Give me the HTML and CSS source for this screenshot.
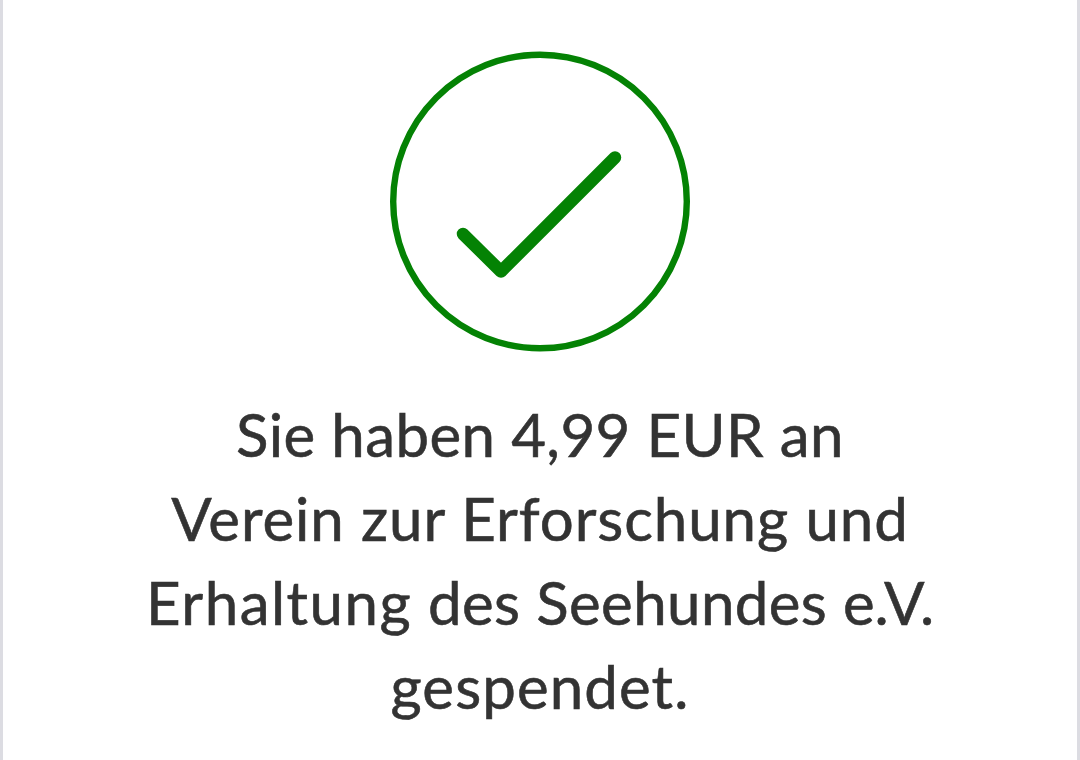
FILE: index.html
```html
<!DOCTYPE html>
<html lang="de">
<head>
  <meta charset="UTF-8" />
  <meta name="viewport" content="width=device-width, initial-scale=1.0"/>
  <title>Spende abgeschlossen</title>
  <link rel="stylesheet" href="styles.css">
</head>
<body>
  <main class="card">
    <svg class="success-icon" viewBox="0 0 300 301" aria-hidden="true">
      <circle cx="150" cy="150.500" r="146.800"/>
      <path class="check" d="M73 183 L111 220.500 L225 106.500"/>
    </svg>
    <h1 class="message">
      <span class="line line-1">Sie haben 4,99 EUR an</span>
      <span class="line line-2">Verein zur Erforschung und</span>
      <span class="line line-3"><span class="wide">Erhaltung</span> des Seehundes <span class="tight">e.V.</span></span>
      <span class="line line-4">gespendet.</span>
    </h1>
  </main>
</body>
</html>
```

FILE: styles.css
```css
:root {
  --success: #048204;
  --text: #333333;
  --border: #dcdce2;
}

* {
  box-sizing: border-box;
  margin: 0;
  padding: 0;
}

body {
  font-family: Lato, 'Open Sans', sans-serif;
  background: #fff;
  color: var(--text);
}

.card {
  display: flex;
  flex-direction: column;
  align-items: center;
  height: 100vh;
  padding-top: 51px;
  border-left: 3px solid var(--border);
  border-right: 3px solid var(--border);
  overflow: hidden;
}

.success-icon {
  width: 300px;
  height: 301px;
  flex-shrink: 0;
  fill: none;
  stroke: var(--success);
  stroke-width: 6.4;
}

.success-icon .check {
  stroke-width: 12.5;
  stroke-linecap: round;
  stroke-linejoin: round;
}

.message {
  margin-top: 40px;
  font-size: 60px;
  font-weight: 400;
  line-height: 84px;
  text-align: center;
  -webkit-text-stroke: 0.6px var(--text);
}

.line {
  display: block;
  white-space: nowrap;
}

/* Tracking per line */
.line-1 {
  letter-spacing: 0.4px;
}

.line-2 {
  letter-spacing: 0.93px;
}

.line-3 {
  letter-spacing: 0.4px;
}

.line-3 .wide {
  letter-spacing: 1.5px;
}

.line-3 .tight {
  letter-spacing: -0.2px;
}

.line-4 {
  letter-spacing: 1.1px;
}
```
